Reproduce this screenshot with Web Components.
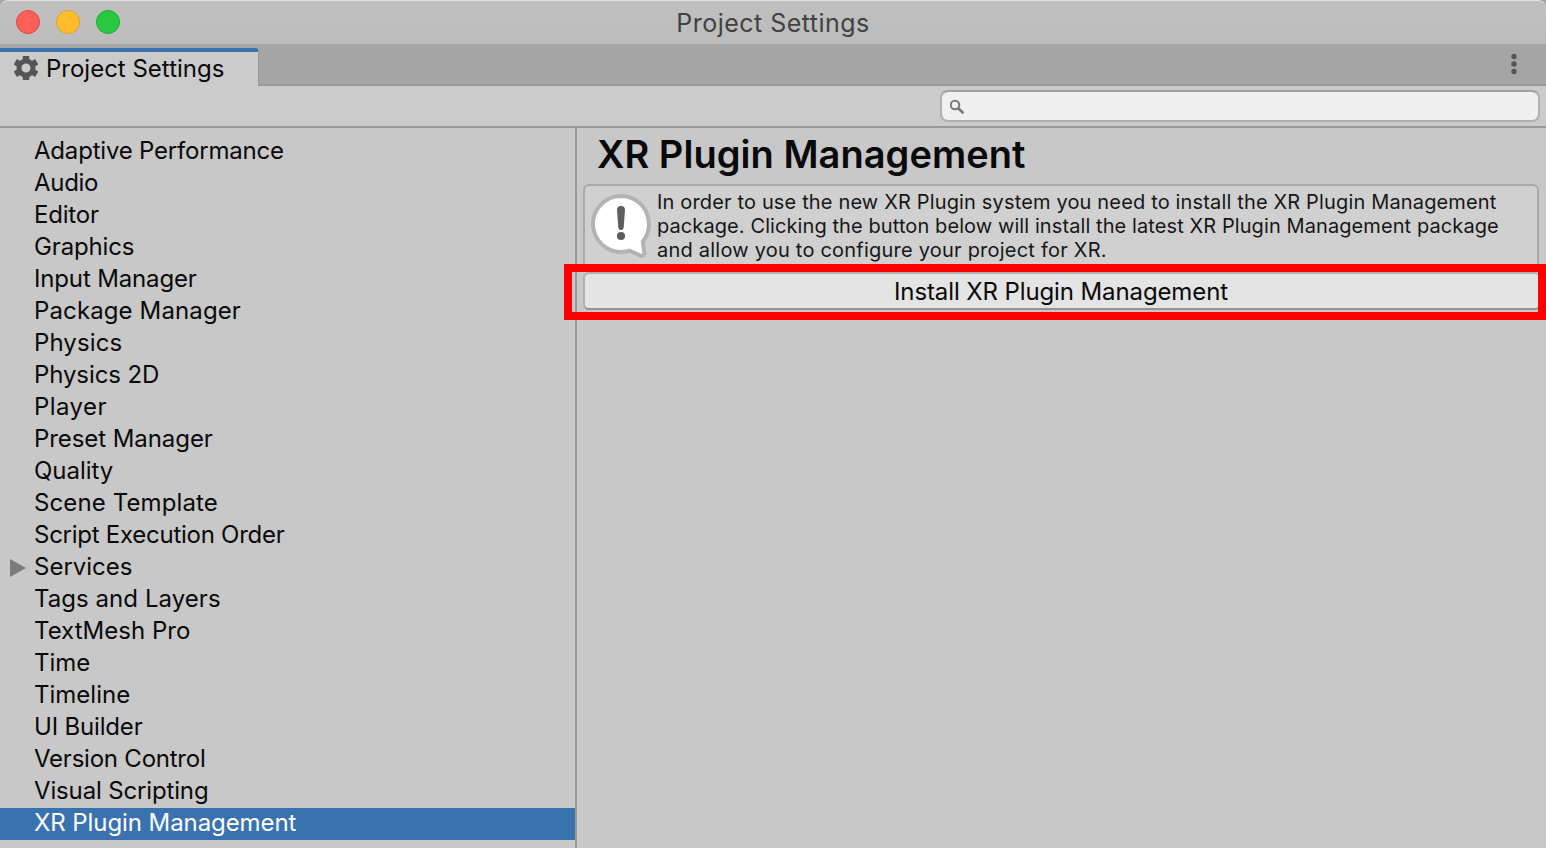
<!DOCTYPE html>
<html lang="en">
<head>
<meta charset="utf-8">
<title>Project Settings</title>
<style>
html,body{margin:0;height:100%;overflow:hidden;background:#c8c8c8}
body{font-family:Inter,"Liberation Sans",sans-serif}
</style>
</head>
<body>
<settings-window></settings-window>
<script>
const define = (name, html) => customElements.define(name, class extends HTMLElement {
  constructor() {
    super();
    const t = document.createElement('template');
    t.innerHTML = html;
    this.attachShadow({mode: 'open'}).append(t.content.cloneNode(true));
  }
});

define('window-titlebar', `<style>
:host{display:grid;grid-template-columns:1fr auto 1fr;align-items:center;height:44px;box-sizing:border-box;border-top:1px solid #e2e2e2;background:linear-gradient(#c0c0c0,#bcbcbc);color:#424242;border-radius:8px 8px 0 0}
.lights{display:flex;gap:16px;padding:0 0 2px 16px}
i{width:24px;height:24px;border-radius:50%;box-sizing:border-box;border:1px solid #e2463f;background:#ff6159}
i:nth-child(2){background:#ffbd2e;border-color:#e1a325}
i:nth-child(3){background:#28c941;border-color:#1dad2b}
.title{font-size:25px;line-height:30px;letter-spacing:.48px;white-space:nowrap}
</style><div class="lights"><i></i><i></i><i></i></div><div class="title"><slot></slot></div><span></span>`);

define('tab-strip', `<style>
:host{display:flex;justify-content:space-between;height:42px;box-sizing:border-box;background:#a5a5a5;padding-top:4px;box-shadow:inset 0 -2px #999}
.tab{display:flex;align-items:center;box-sizing:border-box;width:259px;height:38px;padding:0 0 0 14px;border-top:4px solid #3a72b0;border-right:1px solid #999;border-radius:0 4px 0 0;background:#cbcbcb;font-size:24px;line-height:30px;color:#090909;white-space:nowrap}
.tab svg{margin:0 8px 2px 0}
.menu{margin:5px 28px 0 0}
svg{display:block;flex:none}
</style><div class="tab"><svg width="24" height="24" viewBox="0 0 24 24" fill="none" stroke="#555"><circle cx="12" cy="12" r="7" stroke-width="5"/><path stroke-width="6.400" d="M12 0v5M12 19v5M1.300 5.800l4.600 2.700M18.100 15.500l4.600 2.700M1.300 18.200l4.600-2.700M18.100 8.500l4.600-2.700"/></svg><span class="label"><slot></slot></span></div>
<svg class="menu" width="8" height="24" viewBox="0 0 8 24" fill="#555"><circle cx="4" cy="3.500" r="2.700"/><circle cx="4" cy="11" r="2.700"/><circle cx="4" cy="18.500" r="2.700"/></svg>`);

define('search-bar', `<style>
:host{display:flex;justify-content:flex-end;height:42px;box-sizing:border-box;background:#cbcbcb;border-bottom:2px solid #999;padding:4px 6px 0 0}
.field{display:flex;align-items:center;width:600px;height:32px;box-sizing:border-box;border:2px solid #b0b0b0;border-top-color:#a0a0a0;border-radius:8px;background:#f0f0f0;padding:1px 0 0 8px}
</style><div class="field"><svg width="16" height="16" viewBox="0 0 16 16" fill="none" stroke="#777"><circle cx="5" cy="6" r="4.300" stroke-width="2"/><path d="M8 9l5.500 5.200" stroke-width="2.600"/></svg></div>`);

define('nav-item', `<style>
:host{display:flex;align-items:center;height:32px;box-sizing:border-box;padding:0 0 3px 10px;font-size:24px;line-height:29px;color:#090909;white-space:nowrap}
:host([selected]){background:#3a72b0;color:#fff}
svg{visibility:hidden;margin:2px 8px 0 0;flex:none}
:host([parent]) svg{visibility:visible}
</style><svg width="16" height="18" viewBox="0 0 16 18"><path fill="#7c7c7c" d="M0 0l16 9L0 18z"/></svg><span><slot></slot></span>`);

define('nav-list', `<style>
:host{display:block;width:577px;box-sizing:border-box;border-right:2px solid #999;padding-top:8px;background:#c8c8c8;flex:none}
</style><slot></slot>`);

define('help-box', `<style>
:host{display:flex;height:88px;box-sizing:border-box;border:2px solid #a9a9a9;border-radius:6px;background:#d0d0d0;padding:4px 0 0 6px;color:#161616;font-size:20px;line-height:24px;white-space:nowrap}
svg{flex:none;margin:4px 5px 0 0}
.text{display:flex;flex-direction:column}
</style><svg width="61" height="66" viewBox="0 0 61 66"><path d="M30 2a28 28 0 1 0 8.500 54.700L49 61.300q4.500 1.700 4.300-3L51.800 47.500A28 28 0 0 0 30 2z" fill="#fff" stroke="#b3b3b3" stroke-width="4"/><path fill="#5e5e5e" d="M26 16a4 4 0 0 1 8 0L32.700 33.500q-.3 2.500-2.700 2.500t-2.700-2.500z"/><circle cx="30" cy="42" r="4.100" fill="#5e5e5e"/></svg><div class="text"><slot></slot></div>`);

define('push-button', `<style>
:host{display:flex;justify-content:center;height:38px;box-sizing:border-box;border:2px solid #b0b0b0;border-bottom-color:#939393;border-radius:6px;background:#e4e4e4;font-size:24px;line-height:36px;padding-right:2px;color:#090909}
span{letter-spacing:-.11px}
</style><span><slot></slot></span>`);

define('settings-panel', `<style>
:host{display:block;flex:1;min-width:0;box-sizing:border-box;padding:0 7px 0 6px;background:#c8c8c8}
h1{margin:0;padding:3px 0 0 14px;height:56px;box-sizing:border-box;font-size:38px;line-height:46px;font-weight:600;color:#090909;white-space:nowrap;letter-spacing:.05px}
.action{position:relative;margin-right:-2px}
.action::after{content:"";position:absolute;left:-19px;right:-5px;top:-8px;height:56px;box-sizing:border-box;border:8px solid #f00}
</style><h1><slot name="heading"></slot></h1><slot></slot><div class="action"><slot name="action"></slot></div>`);

// Page name and its tracking in pixels.
const pages = [['Adaptive Performance',-.2],['Audio',-.3],['Editor',-.2],['Graphics',-.15],['Input Manager',-.15],['Package Manager',.12],['Physics',.1],['Physics 2D',-.1],['Player',.45],['Preset Manager',-.07],['Quality',-.04],['Scene Template',.12],['Script Execution Order',-.26],['Services',0],['Tags and Layers',.05],['TextMesh Pro',.02],['Time',0],['Timeline',0],['UI Builder',-.18],['Version Control',-.23],['Visual Scripting',-.15],['XR Plugin Management',-.08]];

define('settings-window', `<style>
:host{display:flex;flex-direction:column;width:1546px;height:848px;overflow:hidden;background:#a5a5a5}
main{display:flex;flex:1;min-height:0}
</style>
<window-titlebar>Project Settings</window-titlebar>
<tab-strip>Project Settings</tab-strip>
<search-bar></search-bar>
<main>
<nav-list>${pages.map(([p, s]) => `<nav-item style="letter-spacing:${s}px"${p === 'Services' ? ' parent' : ''}${p.startsWith('XR') ? ' selected' : ''}>${p}</nav-item>`).join('')}</nav-list>
<settings-panel><span slot="heading">XR Plugin Management</span>
<help-box><span style="letter-spacing:.155px">In order to use the new XR Plugin system you need to install the XR Plugin Management</span><span style="letter-spacing:.09px">package. Clicking the button below will install the latest XR Plugin Management package</span><span style="letter-spacing:.22px">and allow you to configure your project for XR.</span></help-box>
<push-button slot="action">Install XR Plugin Management</push-button></settings-panel>
</main>`);
</script>
</body>
</html>
